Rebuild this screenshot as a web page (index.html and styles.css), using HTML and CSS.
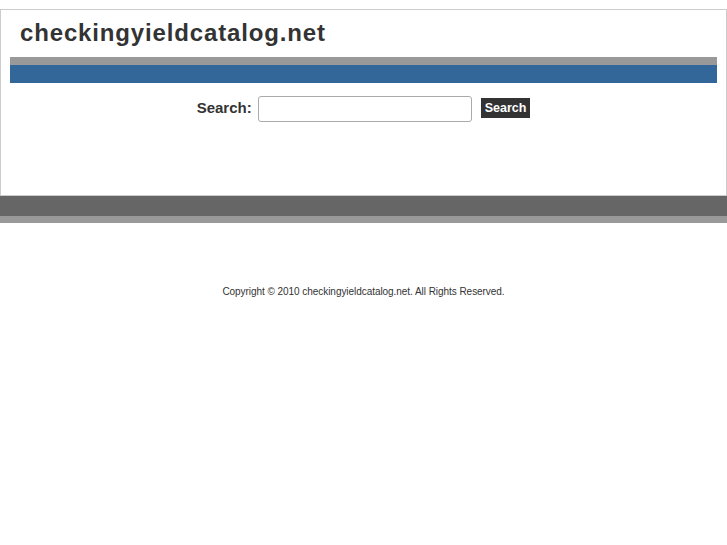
FILE: index.html
```html
<!DOCTYPE html>
<html>
<head>
  <title>checkingyieldcatalog.net</title>
  <link rel="stylesheet" href="styles.css">
</head>
<body>
  <div class="frame">
    <h1 class="sitename">checkingyieldcatalog.net</h1>
    <div class="bar-grey"></div>
    <div class="bar-blue"></div>
    <form class="searchbox" onsubmit="return false">
      <label class="searchlabel">Search:</label>
      <input class="searchinput" type="text">
      <button class="searchbtn" type="submit">Search</button>
    </form>
  </div>
  <div class="foot-dark"></div>
  <div class="foot-light"></div>
  <p class="copyright">Copyright &copy; 2010 checkingyieldcatalog.net. All Rights Reserved.</p>
</body>
</html>
```

FILE: styles.css
```css
body {
  margin: 0;
  padding: 0;
  background: #ffffff;
  font-family: "Liberation Sans", Arial, sans-serif;
  color: #333333;
}
.frame {
  margin-top: 9px;
  border: 1px solid #cccccc;
  height: 185px;
}
.sitename {
  margin: 0;
  padding: 10px 0 0 19px;
  height: 37px;
  font-size: 24px;
  font-weight: bold;
  line-height: 26px;
  letter-spacing: 0.85px;
  color: #333333;
}
.bar-grey {
  margin: 0 9px;
  height: 8px;
  background: #999999;
}
.bar-blue {
  margin: 0 9px;
  height: 18px;
  background: #336699;
}
.searchbox {
  display: flex;
  align-items: center;
  justify-content: center;
  margin: 13px 0 0 0;
}
.searchlabel {
  font-size: 15px;
  font-weight: bold;
  color: #333333;
  margin-right: 6px;
  margin-top: -3px;
}
.searchinput {
  box-sizing: border-box;
  width: 214px;
  height: 26px;
  border: 1px solid #aaaaaa;
  border-radius: 3px;
  margin: 0;
  padding: 0 4px;
}
.searchbtn {
  margin-left: 9px;
  margin-top: -3px;
  height: 20px;
  padding: 0 4px;
  border: none;
  background: #333333;
  color: #ffffff;
  font-family: "Liberation Sans", Arial, sans-serif;
  font-size: 12.5px;
  font-weight: bold;
  line-height: 20px;
}
.foot-dark {
  height: 20px;
  background: #666666;
}
.foot-light {
  height: 7px;
  background: #999999;
}
.copyright {
  margin: 63px 0 0 0;
  text-align: center;
  font-size: 10px;
  letter-spacing: -0.05px;
  color: #333333;
}
```
